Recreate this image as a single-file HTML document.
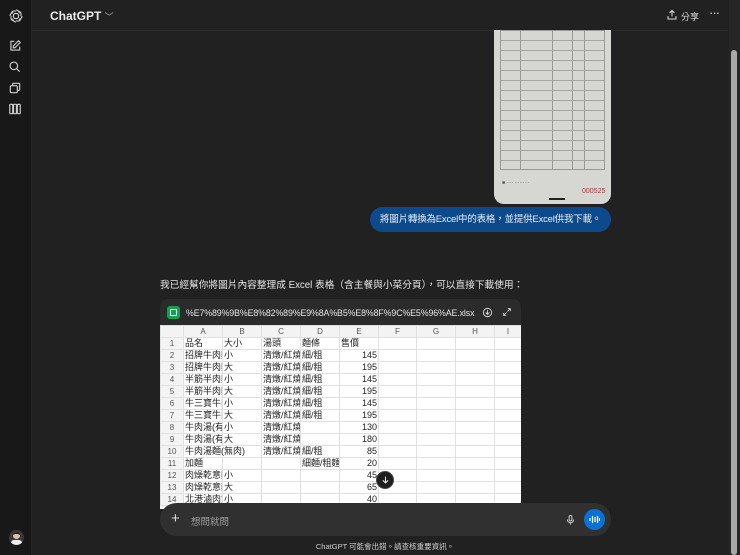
<!DOCTYPE html>
<html><head><meta charset="utf-8"><style>
*{margin:0;padding:0;box-sizing:border-box}
body{width:740px;height:555px;overflow:hidden;background:#212121;font-family:"Liberation Sans","Noto Sans CJK TC",sans-serif;color:#ececec;position:relative}
.side{position:absolute;left:0;top:0;width:32px;height:555px;background:#181818;border-right:1px solid #262626}
.side svg{position:absolute;left:8px}
.hdr{position:absolute;left:32px;top:0;right:12px;height:31px;border-bottom:1px solid #2a2a2a}
.title{position:absolute;left:50px;top:9px;font-size:12px;font-weight:bold;color:#ececec}
.scroll{position:absolute;right:0;top:0;width:11px;height:555px;background:#262626}
.thumb{position:absolute;right:3px;top:50px;width:6px;height:505px;background:#a8a8a8;border-radius:3px}
.img{position:absolute;left:494px;top:30px;width:117px;height:174px;background:#d6d6d2;border-radius:0 0 10px 10px;overflow:hidden}
.img .g{position:absolute;left:6px;right:6px;top:0;height:140px;border:1px solid #999;
background-image:repeating-linear-gradient(#d6d6d2 0 9px,#a5a5a2 9px 10px);}
.img .v{position:absolute;top:0;width:1px;height:140px;background:#999}
.img .t{position:absolute;font-size:5px;color:#666}
.bub{position:absolute;left:370px;top:207px;width:241px;height:25px;background:#0c4a8c;border-radius:13px;font-size:9.5px;line-height:25px;padding-left:10px;color:#e8eef8;white-space:nowrap;letter-spacing:-0.2px}
.ans{position:absolute;left:160px;top:277px;font-size:9.7px;color:#e6e6e6;white-space:nowrap}
.card{position:absolute;left:160px;top:299px;width:361px;height:210px;background:#2b2b2b;border-radius:8px 8px 0 0;overflow:hidden}
.fn{position:absolute;left:26px;top:9px;font-size:8.8px;color:#e5e5e5;letter-spacing:-0.1px}
.ico{position:absolute;left:7px;top:7px;width:13px;height:13px;background:#12a150;border-radius:3px}
.sheet{position:absolute;left:0;top:26px;width:361px;height:184px;background:#fff}
table{border-collapse:collapse;font-size:9px;color:#222;table-layout:fixed;width:361px}
td{height:12px;border:1px solid #e0e0e0;padding:0 1px;white-space:nowrap;overflow:hidden;line-height:11px}
tr.h td{background:#f3f3f3;color:#555;text-align:center;font-size:8px}
td.n{background:#f3f3f3;color:#555;text-align:center;font-size:8px}
td.r{text-align:right}
.down{position:absolute;left:376px;top:471px;width:18px;height:18px;border-radius:50%;background:#1e1e1e;border:1px solid #444}
.inp{position:absolute;left:160px;top:503px;width:451px;height:33px;background:#303030;border-radius:17px}
.ph{position:absolute;left:31px;top:11px;font-size:9.5px;color:#a0a0a0}
.voice{position:absolute;right:6px;top:6px;width:21px;height:21px;border-radius:50%;background:#0a72d6}
.foot{position:absolute;left:0;width:770px;top:541px;text-align:center;font-size:7.5px;color:#cfcfcf}
.av{position:absolute;left:9px;top:530px;width:15px;height:15px;border-radius:50%;background:#3a3a3a;overflow:hidden}
</style></head><body>
<div class="side">
<svg style="top:8px" width="16" height="16" viewBox="0 0 24 24" fill="none" stroke="#ddd" stroke-width="1.6"><circle cx="12" cy="12" r="4"/><path d="M12 3a5 5 0 0 1 5 5M21 12a5 5 0 0 1-5 5M12 21a5 5 0 0 1-5-5M3 12a5 5 0 0 1 5-5M17 5a5 5 0 0 1 2 7M19 17a5 5 0 0 1-7 2M7 19a5 5 0 0 1-2-7M5 7a5 5 0 0 1 7-2"/></svg>
<svg style="top:39px" width="14" height="14" viewBox="0 0 24 24" fill="none" stroke="#ccc" stroke-width="2"><path d="M11 4H5v15h15v-6"/><path d="M18 3l3 3-9 9H9v-3z"/></svg>
<svg style="top:60px" width="14" height="14" viewBox="0 0 24 24" fill="none" stroke="#ccc" stroke-width="2"><circle cx="10" cy="10" r="6.5"/><path d="M15 15l5 5"/></svg>
<svg style="top:81px" width="14" height="14" viewBox="0 0 24 24" fill="none" stroke="#ccc" stroke-width="2"><rect x="4" y="8" width="12" height="12" rx="2"/><path d="M8 8V5a1 1 0 0 1 1-1h10a1 1 0 0 1 1 1v10a1 1 0 0 1-1 1h-3"/></svg>
<svg style="top:102px" width="14" height="14" viewBox="0 0 24 24" fill="none" stroke="#ccc" stroke-width="2"><rect x="3" y="4" width="5" height="16" rx="1"/><rect x="9.5" y="4" width="5" height="16" rx="1"/><rect x="16" y="4" width="5" height="16" rx="1"/></svg>
<div class="av"><div style="position:absolute;left:4px;top:2px;width:7px;height:7px;border-radius:50%;background:#d9c3b0;border-top:2px solid #222"></div><div style="position:absolute;left:2px;top:10px;width:11px;height:6px;background:#eee;border-radius:3px 3px 0 0"></div></div>
</div>
<div class="hdr"></div>
<div class="title">ChatGPT <span style="font-weight:normal;color:#aaa;font-size:9px">﹀</span></div>
<svg style="position:absolute;left:666px;top:9px" width="12" height="12" viewBox="0 0 24 24" fill="none" stroke="#ddd" stroke-width="2"><path d="M12 15V3M7 8l5-5 5 5M4 14v6h16v-6"/></svg>
<div style="position:absolute;left:681px;top:10px;font-size:9px;color:#ddd">分享</div>
<div style="position:absolute;left:709px;top:5px;font-size:13px;color:#ddd;letter-spacing:-1px">···</div>
<div class="img"><div class="g"></div>
<div class="v" style="left:26px"></div><div class="v" style="left:58px"></div><div class="v" style="left:78px"></div><div class="v" style="left:90px"></div>
<div class="t" style="left:8px;top:150px;color:#555">■ ···· ·········</div>
<div class="t" style="left:88px;top:158px;color:#b33;font-size:7px">000525</div>
<div style="position:absolute;left:55px;top:168px;width:16px;height:2px;background:#222"></div>
</div>
<div class="bub">將圖片轉換為Excel中的表格，並提供Excel供我下載。</div>
<div class="ans">我已經幫你將圖片內容整理成 Excel 表格（含主餐與小菜分頁），可以直接下載使用：</div>
<div class="card">
<div class="ico"><div style="position:absolute;left:3px;top:3px;width:7px;height:7px;border:1px solid #fff;border-radius:1px"></div></div>
<div class="fn">%E7%89%9B%E8%82%89%E9%8A%B5%E8%8F%9C%E5%96%AE.xlsx</div>
<svg style="position:absolute;left:322px;top:8px" width="11" height="11" viewBox="0 0 24 24" fill="none" stroke="#ddd" stroke-width="2"><circle cx="12" cy="12" r="9"/><path d="M12 7v8M8 12l4 4 4-4"/></svg>
<svg style="position:absolute;left:342px;top:8px" width="10" height="10" viewBox="0 0 24 24" fill="none" stroke="#ddd" stroke-width="2"><path d="M14 4h6v6M20 4l-7 7M10 20H4v-6M4 20l7-7"/></svg>
<div class="sheet"><table>
<colgroup><col style="width:23px"><col style="width:39px"><col style="width:39px"><col style="width:39px"><col style="width:39px"><col style="width:39px"><col style="width:38px"><col style="width:39px"><col style="width:39px"><col style="width:27px"></colgroup>
<tr class="h"><td></td><td>A</td><td>B</td><td>C</td><td>D</td><td>E</td><td>F</td><td>G</td><td>H</td><td>I</td></tr>
<tr><td class="n">1</td><td>品名</td><td>大小</td><td>湯頭</td><td>麵條</td><td>售價</td><td></td><td></td><td></td><td></td></tr>
<tr><td class="n">2</td><td>招牌牛肉麵</td><td>小</td><td>清燉/紅燒</td><td>細/粗</td><td class="r">145</td><td></td><td></td><td></td><td></td></tr>
<tr><td class="n">3</td><td>招牌牛肉麵</td><td>大</td><td>清燉/紅燒</td><td>細/粗</td><td class="r">195</td><td></td><td></td><td></td><td></td></tr>
<tr><td class="n">4</td><td>半筋半肉麵</td><td>小</td><td>清燉/紅燒</td><td>細/粗</td><td class="r">145</td><td></td><td></td><td></td><td></td></tr>
<tr><td class="n">5</td><td>半筋半肉麵</td><td>大</td><td>清燉/紅燒</td><td>細/粗</td><td class="r">195</td><td></td><td></td><td></td><td></td></tr>
<tr><td class="n">6</td><td>牛三寶牛肉</td><td>小</td><td>清燉/紅燒</td><td>細/粗</td><td class="r">145</td><td></td><td></td><td></td><td></td></tr>
<tr><td class="n">7</td><td>牛三寶牛肉</td><td>大</td><td>清燉/紅燒</td><td>細/粗</td><td class="r">195</td><td></td><td></td><td></td><td></td></tr>
<tr><td class="n">8</td><td>牛肉湯(有</td><td>小</td><td>清燉/紅燒</td><td></td><td class="r">130</td><td></td><td></td><td></td><td></td></tr>
<tr><td class="n">9</td><td>牛肉湯(有</td><td>大</td><td>清燉/紅燒</td><td></td><td class="r">180</td><td></td><td></td><td></td><td></td></tr>
<tr><td class="n">10</td><td colspan="2">牛肉湯麵(無肉)</td><td>清燉/紅燒</td><td>細/粗</td><td class="r">85</td><td></td><td></td><td></td><td></td></tr>
<tr><td class="n">11</td><td>加麵</td><td></td><td></td><td>細麵/粗麵</td><td class="r">20</td><td></td><td></td><td></td><td></td></tr>
<tr><td class="n">12</td><td>肉燥乾意麵</td><td>小</td><td></td><td></td><td class="r">45</td><td></td><td></td><td></td><td></td></tr>
<tr><td class="n">13</td><td>肉燥乾意麵</td><td>大</td><td></td><td></td><td class="r">65</td><td></td><td></td><td></td><td></td></tr>
<tr><td class="n">14</td><td>北港滷肉飯</td><td>小</td><td></td><td></td><td class="r">40</td><td></td><td></td><td></td><td></td></tr>
</table></div>
</div>
<div class="down"><svg style="position:absolute;left:4px;top:3px" width="9" height="10" viewBox="0 0 24 24" fill="none" stroke="#fff" stroke-width="2.5"><path d="M12 3v17M5 13l7 7 7-7"/></svg></div>
<div class="inp">
<div style="position:absolute;left:11px;top:7px;font-size:15px;color:#ddd">+</div>
<div class="ph">想問就問</div>
<svg style="position:absolute;left:405px;top:11px" width="11" height="12" viewBox="0 0 24 24" fill="none" stroke="#ddd" stroke-width="2"><rect x="9" y="2" width="6" height="12" rx="3"/><path d="M5 11a7 7 0 0 0 14 0M12 18v4"/></svg>
<div class="voice"><svg style="position:absolute;left:5px;top:6px" width="11" height="9" viewBox="0 0 22 18" stroke="#fff" stroke-width="2.5" stroke-linecap="round"><path d="M2 7v4M7 3v12M12 5v8M17 3v12M21 7v4"/></svg></div>
</div>
<div class="foot">ChatGPT 可能會出錯。請查核重要資訊。</div>
<div class="scroll"><div class="thumb"></div></div>
</body></html>
